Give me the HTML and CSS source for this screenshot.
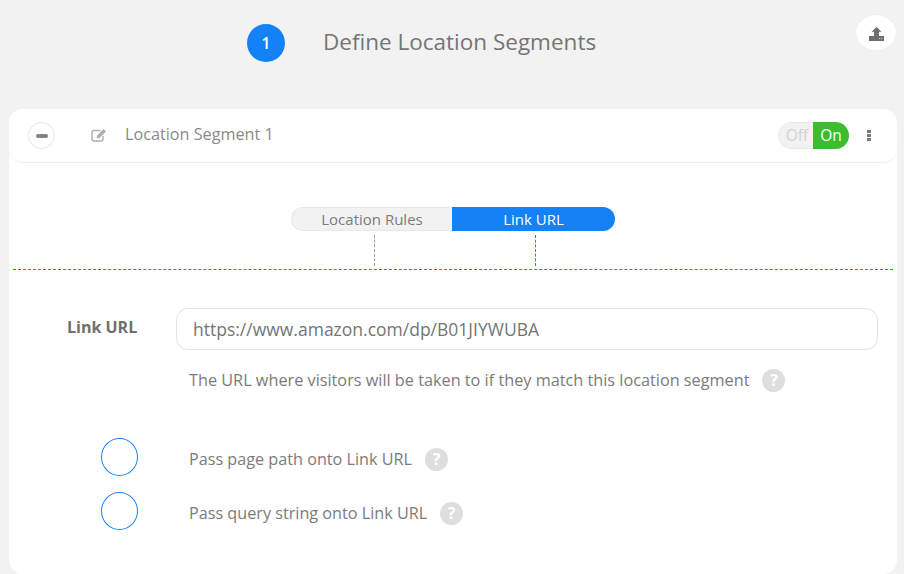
FILE: index.html
```html
<!DOCTYPE html>
<html lang="en">
<head>
  <meta charset="UTF-8" />
  <title>Define Location Segments</title>
  <link rel="stylesheet" href="styles.css">
</head>
<body>
  <div class="page">
    <header class="top">
      <div class="step-num">1</div>
      <h1>Define Location Segments</h1>
      <button class="upload-btn" aria-label="Upload">
        <svg width="15" height="14" viewBox="0 0 15 14"><path d="M7.500 0 L12.500 4.800 H10 V9 H5 V4.800 H2.500 Z" fill="#6b6f72"/><path d="M0 9 H15 V14 H0 Z" fill="#6b6f72"/><rect x="10" y="11" width="1" height="1" fill="#d8d8d8"/><rect x="12" y="11" width="1" height="1" fill="#d8d8d8"/></svg>
      </button>
    </header>

    <section class="card">
      <div class="card-head">
        <span class="collapse"><span class="minus"></span></span>
        <svg class="edit-icon" width="16" height="14" viewBox="0 0 16 14"><path d="M9.500 2.500 H3 A2 2 0 0 0 1 4.500 V11 A2 2 0 0 0 3 13 H10 A2 2 0 0 0 12 11 V8" fill="none" stroke="#b0b0b0" stroke-width="1.400"/><path d="M6 7.500 L12.500 1 L15 3.500 L8.500 10 L5.500 10.500 Z" fill="#b0b0b0"/></svg>
        <span class="seg-name">Location Segment 1</span>
        <div class="toggle"><span class="off">Off</span><span class="on">On</span></div>
        <span class="dots"><i></i><i></i><i></i></span>
      </div>

      <div class="tabs">
        <div class="tab">Location Rules</div>
        <div class="tab active">Link URL</div>
      </div>
      <div class="ticks">
        <span class="tick grey"></span>
        <span class="tick blue"></span>
      </div>
      <div class="divider"></div>

      <div class="url-row">
        <label>Link URL</label>
        <input type="text" value="https://www.amazon.com/dp/B01JIYWUBA" />
      </div>
      <div class="hint">
        <span>The URL where visitors will be taken to if they match this location segment</span>
        <span class="help">?</span>
      </div>

      <div class="check-row first">
        <span class="check"></span>
        <span class="check-label">Pass page path onto Link URL</span>
        <span class="help">?</span>
      </div>
      <div class="check-row">
        <span class="check"></span>
        <span class="check-label">Pass query string onto Link URL</span>
        <span class="help">?</span>
      </div>
    </section>
  </div>
</body>
</html>
```

FILE: styles.css
```css
html, body {
  height: 100%;
}

body {
  font-family: 'Open Sans', Arial, sans-serif;
  margin: 0;
  background-color: #f2f2f2;
  color: #7b7b7b;
  overflow: hidden;
}

.page {
  padding: 0 7px 0 9px;
}

.top {
  height: 109px;
  display: flex;
  align-items: flex-start;
}

.step-num {
  width: 38px;
  height: 38px;
  margin: 24px 0 0 238px;
  border-radius: 50%;
  background: #1282f6;
  color: #fff;
  font-size: 15.500px;
  font-weight: 600;
  display: flex;
  align-items: center;
  justify-content: center;
}

h1 {
  margin: 25px 0 0 38px;
  font-size: 22.500px;
  line-height: 34px;
  font-weight: 400;
  color: #757575;
}

.upload-btn {
  width: 42px;
  height: 37px;
  margin: 14px 0 0 auto;
  padding: 2px 0 0;
  border: 1px solid #eeeeee;
  border-radius: 50%;
  background: #fff;
  display: flex;
  align-items: center;
  justify-content: center;
}

.card {
  background: #fff;
  border-radius: 14px;
  height: 465px;
}

.card-head {
  height: 54px;
  box-sizing: border-box;
  padding: 0 26px 0 19px;
  border-bottom: 1px solid #ececec;
  border-radius: 14px;
  display: flex;
  align-items: center;
}

.collapse {
  width: 27px;
  height: 27px;
  box-sizing: border-box;
  border: 1px solid #e6e6e6;
  border-radius: 50%;
  display: flex;
  align-items: center;
  justify-content: center;
}

.minus {
  width: 12px;
  height: 4px;
  border-radius: 2px;
  background: #858585;
}

.edit-icon {
  margin: -2px 0 0 36px;
}

.seg-name {
  margin: -4px 0 0 18px;
  font-size: 16.200px;
  color: #8a8a8a;
}

.toggle {
  margin-left: auto;
  width: 71px;
  height: 27px;
  display: flex;
  font-size: 15.500px;
  line-height: 27px;
  text-align: center;
  border-radius: 14px;
  overflow: hidden;
}

.toggle .off {
  width: 35px;
  box-sizing: border-box;
  padding-left: 2px;
  background: #f2f2f2;
  color: #d2d2d2;
  border: 1px solid #e8e8e8;
  border-right: 0;
  border-radius: 14px 0 0 14px;
  line-height: 25px;
}

.toggle .on {
  width: 36px;
  background: #3cbc2e;
  color: #fff;
}

.dots {
  margin-left: 18px;
  width: 4px;
  display: flex;
  flex-direction: column;
  gap: 1px;
}

.dots i {
  width: 4px;
  height: 3px;
  background: #7b7b7b;
}

.tabs {
  margin: 44px 0 0 282px;
  width: 324px;
  height: 24px;
  display: flex;
  font-size: 15px;
  line-height: 24px;
  text-align: center;
}

.tab {
  width: 161px;
  box-sizing: border-box;
  background: #f2f2f2;
  border: 1px solid #e8e8e8;
  border-right: 0;
  border-radius: 12px 0 0 12px;
  line-height: 23px;
  color: #7b7b7b;
}

.tab.active {
  width: 163px;
  background: #1282f6;
  border: 0;
  border-radius: 0 12px 12px 0;
  line-height: 25px;
  color: #fff;
}

.ticks {
  height: 31px;
  margin-top: 4px;
  display: flex;
  padding-left: 365px;
  gap: 160px;
}

.tick {
  width: 0;
  height: 31px;
  border-left: 1px dashed #9a9a9a;
}

.tick.blue {
  border-left-color: #1282f6;
}

.divider {
  margin: 3px 0 0 4px;
  border-top: 1px dashed #1282f6;
  width: 880px;
}

.url-row {
  margin-top: 38px;
  display: flex;
  align-items: center;
  padding-right: 19px;
}

.url-row label {
  width: 109px;
  margin-left: 58px;
  margin-top: -5px;
  font-size: 16px;
  font-weight: 700;
  color: #6f6f6f;
}

.url-row input {
  flex: 1;
  height: 42px;
  box-sizing: border-box;
  padding: 0 16px;
  border: 1px solid #e2e2e2;
  border-radius: 12px;
  font-family: inherit;
  font-size: 17.500px;
  color: #757575;
  outline: none;
}

.hint {
  margin: 18px 0 0 180px;
  height: 24px;
  display: flex;
  align-items: center;
  font-size: 16.250px;
  gap: 13px;
}

.help {
  width: 23px;
  height: 23px;
  border-radius: 50%;
  background: #dedede;
  color: #fff;
  font-size: 16px;
  font-weight: 700;
  line-height: 23px;
  text-align: center;
}

.check-row {
  height: 38px;
  margin-top: 16px;
  padding-left: 92px;
  display: flex;
  align-items: center;
  font-size: 16.200px;
  gap: 13px;
}

.check-row.first {
  margin-top: 46px;
}

.check-row .check-label,
.check-row .help {
  margin-top: 4px;
}

.check {
  width: 37px;
  height: 38px;
  box-sizing: border-box;
  border: 1px solid #1a82f0;
  border-radius: 50%;
  margin-right: 38px;
}
```
